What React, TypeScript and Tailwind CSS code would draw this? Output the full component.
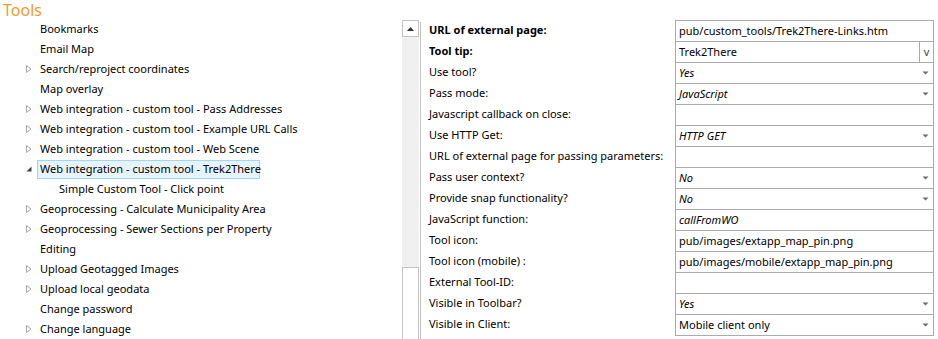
import React from 'react';

type TreeItem = {
  label: string;
  toggle: 'none' | 'closed' | 'open';
  depth?: number;
  selected?: boolean;
};

type PropRow = {
  label: string;
  value: string;
  kind: 'text' | 'combo' | 'select';
  bold?: boolean;
  italic?: boolean;
};

const treeItems: TreeItem[] = [
  { label: 'Bookmarks', toggle: 'none' },
  { label: 'Email Map', toggle: 'none' },
  { label: 'Search/reproject coordinates', toggle: 'closed' },
  { label: 'Map overlay', toggle: 'none' },
  { label: 'Web integration - custom tool - Pass Addresses', toggle: 'closed' },
  { label: 'Web integration - custom tool - Example URL Calls', toggle: 'closed' },
  { label: 'Web integration - custom tool - Web Scene', toggle: 'closed' },
  { label: 'Web integration - custom tool - Trek2There', toggle: 'open', selected: true },
  { label: 'Simple Custom Tool - Click point', toggle: 'none', depth: 1 },
  { label: 'Geoprocessing - Calculate Municipality Area', toggle: 'closed' },
  { label: 'Geoprocessing - Sewer Sections per Property', toggle: 'closed' },
  { label: 'Editing', toggle: 'none' },
  { label: 'Upload Geotagged Images', toggle: 'closed' },
  { label: 'Upload local geodata', toggle: 'closed' },
  { label: 'Change password', toggle: 'none' },
  { label: 'Change language', toggle: 'closed' },
];

const propRows: PropRow[] = [
  { label: 'URL of external page:', value: 'pub/custom_tools/Trek2There-Links.htm', kind: 'text', bold: true },
  { label: 'Tool tip:', value: 'Trek2There', kind: 'combo', bold: true },
  { label: 'Use tool?', value: 'Yes', kind: 'select', italic: true },
  { label: 'Pass mode:', value: 'JavaScript', kind: 'select', italic: true },
  { label: 'Javascript callback on close:', value: '', kind: 'text' },
  { label: 'Use HTTP Get:', value: 'HTTP GET', kind: 'select', italic: true },
  { label: 'URL of external page for passing parameters:', value: '', kind: 'text' },
  { label: 'Pass user context?', value: 'No', kind: 'select', italic: true },
  { label: 'Provide snap functionality?', value: 'No', kind: 'select', italic: true },
  { label: 'JavaScript function:', value: 'callFromWO', kind: 'text', italic: true },
  { label: 'Tool icon:', value: 'pub/images/extapp_map_pin.png', kind: 'text' },
  { label: 'Tool icon (mobile) :', value: 'pub/images/mobile/extapp_map_pin.png', kind: 'text' },
  { label: 'External Tool-ID:', value: '', kind: 'text' },
  { label: 'Visible in Toolbar?', value: 'Yes', kind: 'select', italic: true },
  { label: 'Visible in Client:', value: 'Mobile client only', kind: 'select' },
];

function Toggle({ state }: { state: TreeItem['toggle'] }) {
  if (state === 'closed') {
    return (
      <svg width="8" height="10" viewBox="0 0 8 10" className="shrink-0">
        <path d="M1.5 1.5 L6 5 L1.5 8.5 Z" fill="none" stroke="#a6a6a6" strokeWidth="1" />
      </svg>
    );
  }
  if (state === 'open') {
    return (
      <svg width="8" height="10" viewBox="0 0 8 10" className="shrink-0">
        <path d="M6.5 2.5 L6.5 7.5 L1.5 7.5 Z" fill="#404040" />
      </svg>
    );
  }
  return <span className="w-[8px] shrink-0" />;
}

function ToolTree() {
  return (
    <div className="w-[400px] shrink-0">
      <div className="h-[19px] pl-[3px] pt-[2px] text-[16px] leading-[16px] text-[#f29b2c]">Tools</div>
      {treeItems.map((item) => (
        <div
          key={item.label}
          className={`flex h-[20px] items-center ${item.depth ? 'pl-[52px]' : 'pl-[25px]'}`}
        >
          {!item.depth && <Toggle state={item.toggle} />}
          <div
            className={`flex h-[19px] items-center pl-[2px] pr-[4px] whitespace-nowrap ${
              item.selected ? 'ml-[4px] w-[223px] border border-[#9fd5f5] bg-[#e5f3fb]' : 'ml-[5px]'
            }`}
          >
            {item.label}
          </div>
        </div>
      ))}
    </div>
  );
}

function Caret() {
  return (
    <svg width="7" height="4" viewBox="0 0 7 4" className="shrink-0">
      <path d="M0.5 0.5 L6.5 0.5 L3.5 3.5 Z" fill="#6b6b6b" />
    </svg>
  );
}

function ValueCell({ row }: { row: PropRow }) {
  return (
    <div className="flex h-[21px] items-center border-b border-[#ababab]">
      <div className={`flex-1 pl-[3px] whitespace-nowrap ${row.italic ? 'italic' : ''}`}>
        {row.value}
      </div>
      {row.kind === 'select' && (
        <div className="pr-[4px]">
          <Caret />
        </div>
      )}
      {row.kind === 'combo' && (
        <div className="flex h-full w-[14px] items-center justify-center border-l border-[#ababab] text-[11px] text-[#444]">
          v
        </div>
      )}
    </div>
  );
}

function Scrollbar() {
  return (
    <div className="flex w-[17px] shrink-0 flex-col">
      <div className="flex h-[17px] items-center justify-center border border-[#c4c4c4] bg-white">
        <svg width="7" height="4" viewBox="0 0 7 4">
          <path d="M0 4 L3.5 0 L7 4 Z" fill="#333" />
        </svg>
      </div>
      <div className="h-[230px] bg-[#f0f0f0]" />
      <div className="flex-1 border-x border-t border-[#c4c4c4] bg-white" />
    </div>
  );
}

function PropertyPanel() {
  return (
    <div className="flex flex-1 pt-[20px]">
      <div className="ml-[2px] flex">
        <Scrollbar />
        <div className="ml-[1px] mt-[2px] w-px bg-[#c4c4c4]" />
      </div>
      <div className="flex pl-[8px]">
        <div className="w-[246px]">
          {propRows.map((row) => (
            <div
              key={row.label}
              className={`flex h-[21px] items-center whitespace-nowrap ${row.bold ? 'font-bold' : ''}`}
            >
              {row.label}
            </div>
          ))}
        </div>
        <div className="h-fit w-[259px] border-x border-t border-[#ababab]">
          {propRows.map((row) => (
            <ValueCell key={row.label} row={row} />
          ))}
        </div>
      </div>
    </div>
  );
}

export default function App() {
  return (
    <div
      className="flex h-[339px] w-[938px] overflow-hidden bg-white text-[11px] text-black"
      style={{ fontFamily: '"Noto Sans", sans-serif' }}
    >
      <ToolTree />
      <PropertyPanel />
    </div>
  );
}
